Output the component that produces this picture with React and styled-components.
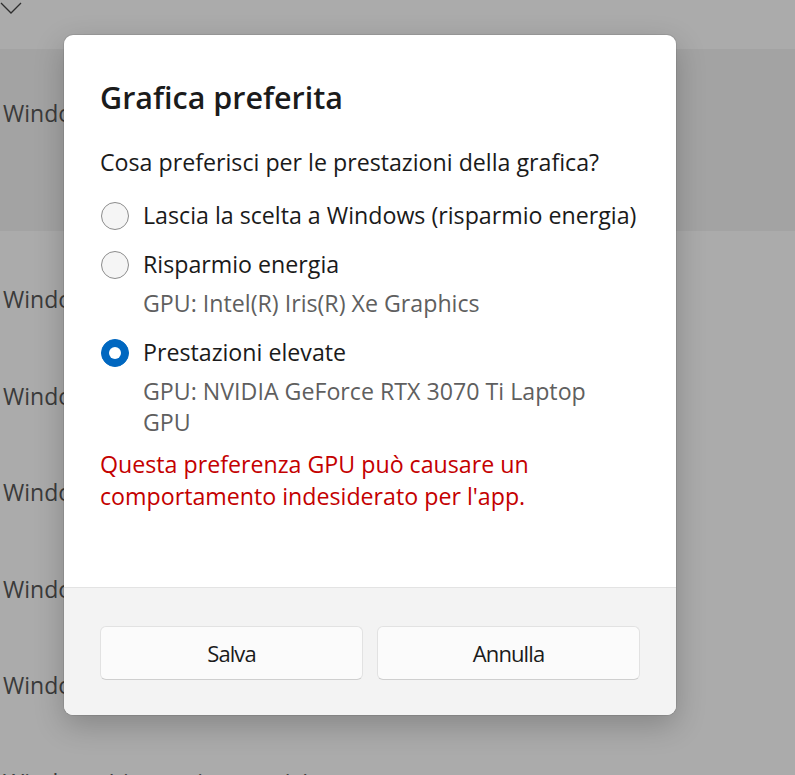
import React from "react";
import styled, { createGlobalStyle } from "styled-components";

const GlobalStyle = createGlobalStyle`
  html, body {
    margin: 0;
    padding: 0;
    height: 100%;
    overflow: hidden;
  }
  body {
    font-family: "Open Sans", "Noto Sans", "Liberation Sans", sans-serif;
    background: #ababab;
  }
`;

export default function App() {
  const rows = [
    "Windows Terminal",
    "Windows Media Player",
    "Windows Security",
    "Windows Explorer",
    "Windows Store",
  ];

  const options = [
    {
      id: "auto",
      label: "Lascia la scelta a Windows (risparmio energia)",
      selected: false,
    },
    {
      id: "saver",
      label: "Risparmio energia",
      desc: "GPU: Intel(R) Iris(R) Xe Graphics",
      selected: false,
    },
    {
      id: "perf",
      label: "Prestazioni elevate",
      desc: "GPU: NVIDIA GeForce RTX 3070 Ti Laptop GPU",
      selected: true,
    },
  ];

  return (
    <Page>
      <GlobalStyle />

      {/* settings page behind the dim overlay */}
      <ChevronRow>
        <svg width="22" height="16" viewBox="0 0 22 16">
          <path d="M1 4 L11 14 L21 4" fill="none" stroke="#2e2e2e" strokeWidth="1.3" />
        </svg>
      </ChevronRow>
      <ExpandedItem>
        <ItemText>Windows Terminal Preview</ItemText>
      </ExpandedItem>
      <List>
        {rows.map((r) => (
          <ListRow key={r}>
            <ItemText>{r}</ItemText>
          </ListRow>
        ))}
        <ListRow>
          <ItemText>Windows (risparmio energia)</ItemText>
        </ListRow>
      </List>

      {/* modal */}
      <Dialog role="dialog" aria-label="Grafica preferita">
        <Body>
          <Title>Grafica preferita</Title>
          <Question>Cosa preferisci per le prestazioni della grafica?</Question>
          <Options>
            {options.map((o) => (
              <Option key={o.id}>
                <OptionRow>
                  <Radio $checked={o.selected} />
                  <Label>{o.label}</Label>
                </OptionRow>
                {o.desc && <Desc>{o.desc}</Desc>}
              </Option>
            ))}
          </Options>
          <Warning>
            Questa preferenza GPU può causare un comportamento indesiderato per
            l'app.
          </Warning>
        </Body>
        <Footer>
          <Button>Salva</Button>
          <Button>Annulla</Button>
        </Footer>
      </Dialog>
    </Page>
  );
}

/* ================= background ================= */

const Page = styled.div`
  position: relative;
  width: 795px;
  height: 775px;
  overflow: hidden;
  background: #ababab;
`;

const ChevronRow = styled.div`
  height: 50px;
  svg {
    display: block;
    margin-top: -1px;
  }
`;

const ExpandedItem = styled.div`
  height: 182px;
  background: #a3a3a3;
  padding-top: 48px;
  box-sizing: border-box;
`;

const List = styled.div`
  display: flex;
  flex-direction: column;
  padding-top: 20px;
`;

const ListRow = styled.div`
  height: 96.5px;
  display: flex;
  align-items: center;
`;

const ItemText = styled.span`
  padding-left: 3px;
  font-size: 23px;
  line-height: 32px;
  color: #3a3a3a;
  white-space: nowrap;
`;

/* ================= dialog ================= */

const Dialog = styled.div`
  position: absolute;
  left: 64px;
  top: 35px;
  width: 612px;
  height: 680px;
  display: flex;
  flex-direction: column;
  background: #fff;
  border-radius: 9px;
  overflow: hidden;
  box-shadow: 0 10px 30px rgba(0, 0, 0, 0.22), 0 0 0 1px rgba(0, 0, 0, 0.08);
`;

const Body = styled.div`
  flex: 1 1 auto;
  padding: 42px 36px 0;
  color: #1a1a1a;
`;

const Title = styled.h2`
  margin: 0;
  font-size: 30.5px;
  font-weight: 600;
  line-height: 40px;
  color: #1b1b1b;
`;

const Question = styled.p`
  margin: 30px 0 0;
  font-size: 23.2px;
  line-height: 31px;
`;

const Options = styled.div`
  margin-top: 22px;
  display: flex;
  flex-direction: column;
  gap: 18px;
`;

const Option = styled.div`
  display: flex;
  flex-direction: column;
`;

const OptionRow = styled.div`
  display: flex;
  align-items: center;
  gap: 14px;
`;

const Radio = styled.span`
  position: relative;
  flex: 0 0 auto;
  width: 28px;
  height: 28px;
  margin-left: 1px;
  box-sizing: border-box;
  border-radius: 50%;
  background: ${(p) => (p.$checked ? "#0067c0" : "#f5f5f5")};
  border: 1px solid ${(p) => (p.$checked ? "#0067c0" : "#8c8c8c")};
  &::after {
    content: "";
    display: ${(p) => (p.$checked ? "block" : "none")};
    position: absolute;
    left: 50%;
    top: 50%;
    width: 12px;
    height: 12px;
    margin: -6px 0 0 -6px;
    border-radius: 50%;
    background: #fff;
  }
`;

const Label = styled.span`
  font-size: 23.2px;
  line-height: 31px;
  color: #1a1a1a;
`;

const Desc = styled.div`
  margin: 8px 0 0 43px;
  max-width: 470px;
  font-size: 23.2px;
  line-height: 31px;
  color: #5f5f5f;
`;

const Warning = styled.p`
  margin: 10px 0 0;
  font-size: 23.2px;
  line-height: 32px;
  color: #c40000;
`;

const Footer = styled.div`
  flex: 0 0 127px;
  box-sizing: border-box;
  display: grid;
  grid-template-columns: 1fr 1fr;
  gap: 14px;
  padding: 38px 36px 35px;
  background: #f3f3f3;
  border-top: 1px solid #e3e3e3;
`;

const Button = styled.button`
  height: 54px;
  border: 1px solid #e2e2e2;
  border-bottom-color: #cfcfcf;
  border-radius: 6px;
  background: #fbfbfb;
  font-family: inherit;
  font-size: 22px;
  letter-spacing: -0.9px;
  color: #1b1b1b;
  cursor: pointer;
`;
